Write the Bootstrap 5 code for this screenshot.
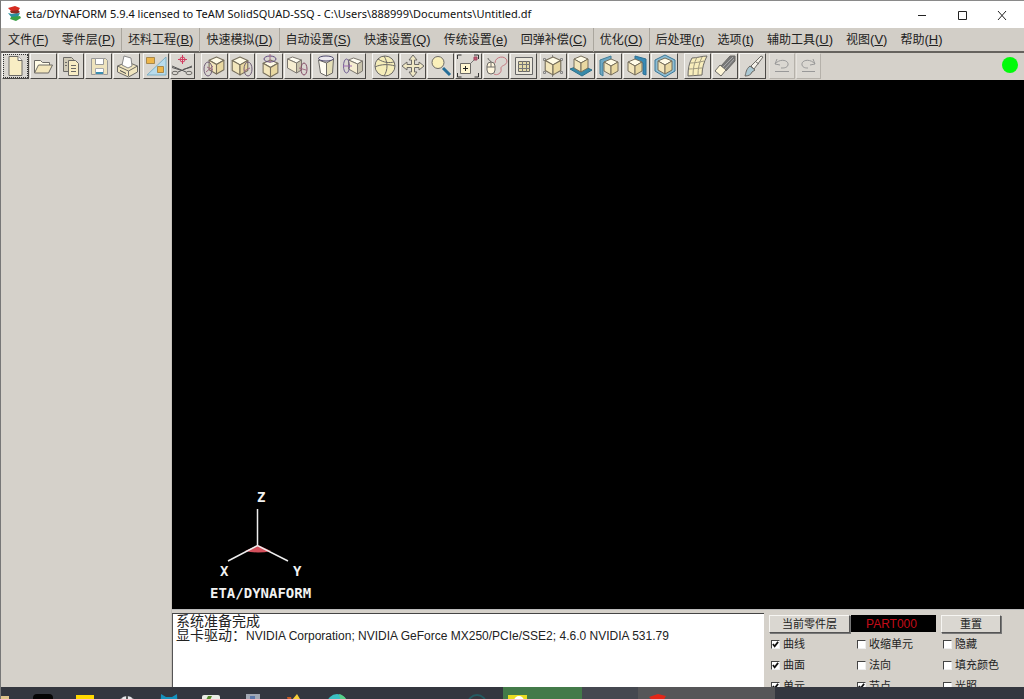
<!DOCTYPE html>
<html lang="zh-CN">
<head>
<meta charset="utf-8">
<meta name="viewport" content="width=device-width, initial-scale=1">
<title>eta/DYNAFORM</title>
<link rel="stylesheet" href="https://cdn.jsdelivr.net/npm/bootstrap@5.3.0/dist/css/bootstrap.min.css">
<style>
  :root { --face: #d5d1ca; --ui: "Liberation Sans", "Noto Sans CJK SC", sans-serif; }
  body { font-family: var(--ui); font-size: 12px; line-height: 16px; color: #222; background: var(--face); }
  .app-window { border-top: 1px solid #8a8a8a; border-left: 1px solid #777; }
  .title-bar { height: 27px; padding: 0 2px 2px 6px; font-family: "Noto Sans", sans-serif; font-size: 11px; color: #111; }
  .win-btn { width: 40px; height: 25px; border: 0; background: none; padding: 0; }
  .menu-bar { height: 25px; padding-left: 1px; border-bottom: 2px solid #66635e; background: #d2cec7; }
  .menu-bar a { display: block; padding: 4px 6px; color: #222; text-decoration: none; white-space: nowrap; border-right: 1px solid transparent; line-height: 16px; }
  .menu-bar li.split a { border-right-color: #aaa69e; }
  .hotkey { font-size: 13px; }
  .tool-bar { height: 27px; padding-left: 1px; }
  .tool-set { display: grid; grid-auto-flow: column; grid-auto-columns: 1fr; gap: 1px; }
  .g3 { margin-left: 3px; } .g6 { margin-left: 6px; }
  .w2 { width: 52px; } .w3 { width: 82px; } .w5 { width: 138px; } .w6 { width: 165px; }
  .tool { height: 26px; padding: 0; background: #dad7d1; border: 1px solid; border-color: #f6f5f2 #4c4a47 #4c4a47 #f6f5f2; display: flex; align-items: center; justify-content: center; overflow: hidden; }
  .tool svg { width: 24px; height: 24px; flex: none; fill: none; stroke: #6c6a66; }
  .tool.chosen { outline: 1px dotted #333; outline-offset: -2px; }
  .tool:disabled { border-color: #e6e3de #b5b1aa #b5b1aa #e6e3de; }
  .lamp { width: 16px; height: 16px; background: #00fb0a; margin-right: 6px; }
  .side { width: 171px; border-right: 1px solid #c4c0b9; }
  .scene { background: #000; }
  .axes { width: 130px; height: 120px; margin-left: 26px; }
  .axes text { font: bold 14px "DejaVu Sans Mono", monospace; fill: #f2f2f2; }
  .dock { height: 78px; padding-top: 3px; overflow: hidden; border-top: 1px solid #bbb; }
  .log { background: #fff; border-top: 1px solid #444; border-left: 1px solid #555; padding: 0 3px; font-size: 14px; line-height: 14px; }
  .log .latin { font-size: 12px; }
  .layer-panel { width: 260px; padding: 2px 0 0 5px; font-size: 11px; }
  .layer-grid { display: grid; grid-template-columns: 86px 86px 80px; row-gap: 5px; margin-top: 3px; }
  .flat-btn { height: 18px; padding: 0; line-height: 16px; font-size: 11px; color: #222; background: #dad7d1; border: 1px solid; border-color: #f6f5f2 #555 #555 #f6f5f2; box-shadow: 1px 1px 0 #777; }
  .part-name { width: 85px; height: 17px; background: #000; color: #c40c18; font-size: 12px; line-height: 18px; margin: 0 5px 0 1px; padding-right: 4px; }
  .btn-layer { width: 81px; } .btn-reset { width: 60px; }
  .opt { display: flex; align-items: center; height: 16px; gap: 3px; padding-left: 2px; white-space: nowrap; }
  .opt input { appearance: none; margin: 0; width: 9px; height: 9px; background: #fff; border: 1px solid; border-color: #444 #eee #eee #444; }
  .opt input:checked { background: #fff url("data:image/svg+xml,%3Csvg xmlns='http://www.w3.org/2000/svg' viewBox='0 0 8 8'%3E%3Cpath d='M1 3.5l2 2.5 4-5' fill='none' stroke='%23111' stroke-width='2'/%3E%3C/svg%3E") center / 7px no-repeat; }
  .task-bar { height: 12px; background: #34373f; overflow: hidden; }
  .task { width: 42px; padding: 7px 0 0; border: 0; background: none; display: flex; justify-content: center; align-items: start; flex: none; }
  .task svg { width: 20px; height: 20px; flex: none; }
  .task.edge { width: 21px; justify-content: start; }
  .task.idle { width: 98px; }
  .task.green { width: 79px; background: #437a49; justify-content: start; padding-left: 5px; margin-left: 5px; }
  .task.gray { width: 56px; background: #454850; }
  .task.open { width: 137px; background: #565658; justify-content: start; padding-left: 10px; }
</style>
</head>
<body>
<svg class="d-none" aria-hidden="true">
  <symbol id="cube" viewBox="0 0 16 18">
    <g stroke="#776f5c" stroke-width="1" stroke-linejoin="round">
      <path d="M8 1l7 3-7 4-7-4z" fill="#fffbe6"/><path d="M1 4l7 4v9l-7-4z" fill="#f3e6bb"/><path d="M15 4L8 8v9l7-4z" fill="#e9d8a1"/>
    </g>
  </symbol>
  <symbol id="slab" viewBox="0 0 16 18">
    <g stroke="#7c776f" stroke-width="1" stroke-linejoin="round">
      <path d="M1 3l5-2 9 3-5 3z" fill="#fffdf2"/><path d="M1 3l9 4v10l-9-5z" fill="#f7eed2"/><path d="M10 7l5-3v10l-5 3z" fill="#c9c3ac"/>
    </g>
  </symbol>
</svg>
<div class="app-window d-flex flex-column vh-100 overflow-hidden">
  <header class="title-bar bg-white d-flex align-items-center flex-shrink-0">
    <svg width="15" height="15" viewBox="0 0 15 15" class="me-1 flex-shrink-0">
      <path d="M1 2l7-2 5 2-2 3-6 1z" fill="#d52b20"/><path d="M3 5l8-1 2 2-3 2-6-1z" fill="#8c2b20"/><path d="M1 7l4 1 8-1-2 4-6 1z" fill="#2b91a0"/><path d="M4 11l9-1 1 2-5 3-6-2z" fill="#39a043"/>
    </svg>
    <span class="text-nowrap">eta/DYNAFORM 5.9.4 licensed to TeAM SolidSQUAD-SSQ - C:\Users\888999\Documents\Untitled.df</span>
    <div class="ms-auto d-flex">
      <button class="win-btn" aria-label="最小化"><svg width="12" height="12" viewBox="0 0 12 12" stroke="#222"><path d="M2 6.500h8"/></svg></button>
      <button class="win-btn" aria-label="最大化"><svg width="12" height="12" viewBox="0 0 12 12" fill="none" stroke="#222"><path d="M2.500 2.500h8v8h-8z"/></svg></button>
      <button class="win-btn" aria-label="关闭"><svg width="12" height="12" viewBox="0 0 12 12" stroke="#222"><path d="M2 2l8 9M10 2l-8 9"/></svg></button>
    </div>
  </header>
  <nav class="flex-shrink-0">
    <ul class="menu-bar list-unstyled d-flex mb-0">
      <li><a href="#">文件<span class="hotkey">(<u>F</u>)</span></a></li>
      <li class="split"><a href="#">零件层<span class="hotkey">(<u>P</u>)</span></a></li>
      <li class="split"><a href="#">坯料工程<span class="hotkey">(<u>B</u>)</span></a></li>
      <li class="split"><a href="#">快速模拟<span class="hotkey">(<u>D</u>)</span></a></li>
      <li><a href="#">自动设置<span class="hotkey">(<u>S</u>)</span></a></li>
      <li><a href="#">快速设置<span class="hotkey">(<u>Q</u>)</span></a></li>
      <li><a href="#">传统设置<span class="hotkey">(<u>e</u>)</span></a></li>
      <li class="split"><a href="#">回弹补偿<span class="hotkey">(<u>C</u>)</span></a></li>
      <li class="split"><a href="#">优化<span class="hotkey">(<u>O</u>)</span></a></li>
      <li><a href="#">后处理<span class="hotkey">(<u>r</u>)</span></a></li>
      <li><a href="#">选项<span class="hotkey">(<u>t</u>)</span></a></li>
      <li><a href="#">辅助工具<span class="hotkey">(<u>U</u>)</span></a></li>
      <li><a href="#">视图<span class="hotkey">(<u>V</u>)</span></a></li>
      <li><a href="#">帮助<span class="hotkey">(<u>H</u>)</span></a></li>
    </ul>
  </nav>
  <div class="tool-bar d-flex flex-shrink-0" role="toolbar" aria-label="工具栏">
    <div class="tool-set w5">
      <button class="tool chosen" aria-label="新建"><svg viewBox="0 0 24 24"><path d="M6 2.500h9l4 4v15H6z" fill="#f8edc4"/><path d="M15 2.500v4h4" fill="#fff"/></svg></button>
      <button class="tool" aria-label="打开"><svg viewBox="0 0 24 24"><path d="M3.500 19V6.500h6l2 2h7V11" fill="#fffbe6"/><path d="M3.500 19l4-8h14l-4 8z" fill="#f3e6bb"/></svg></button>
      <button class="tool" aria-label="复制"><svg viewBox="0 0 24 24"><path d="M4.500 3.500h8l2 2v12h-10z" fill="#d0cab6"/><path d="M9.500 6.500h7l3 3v12h-10z" fill="#f8edc4"/><path d="M12 11.500h5M12 14.500h5M12 17.500h5M6 8.500h2M6 11.500h2"/></svg></button>
      <button class="tool" aria-label="保存"><svg viewBox="0 0 24 24"><path d="M4.500 4.500h14l2 2v14h-16z" fill="#eee3bd" stroke="#999"/><path d="M8.500 4.500h8v6h-8z" fill="#fff" stroke="#999"/><path d="M8.500 14.500h8v6h-8z" fill="#fff" stroke="#aaa"/><path d="M9 18h7v2H9z" fill="#3b8fb0" stroke="none"/></svg></button>
      <button class="tool" aria-label="打印"><svg viewBox="0 0 24 24" stroke-linejoin="round"><path d="M2.500 12l10-4 10 4v6l-9 5-11-5z" fill="#f0e5be"/><path d="M2.500 12l11 5 9-5M13.500 17v5"/><path d="M7 11l2-9 7 2 1 8-4 2z" fill="#fff" stroke="#888"/><path d="M5 16.500l6 3" stroke="#444"/></svg></button>
    </div>
    <div class="tool-set w2 g3">
      <button class="tool" aria-label="坯料"><svg viewBox="0 0 24 24"><path d="M22 3v18H3z" fill="#b9dcec" stroke="#7fb0c5"/><path d="M2.500 3.500h8v6h-8z" fill="#eeb64a" stroke="#a8884c"/><path d="M13.500 12.500h6v6h-6z" fill="#eeb64a" stroke="#a8884c"/></svg></button>
      <button class="tool" aria-label="裁剪"><svg viewBox="0 0 24 24"><path d="M12.500 1v9M8 5.500h9" stroke="#d33d61"/><circle cx="12.500" cy="5.500" r="2.500" stroke="#d33d61"/><path d="M2 12l14 6M22 12L8 18M2 13.500l10 3M22 13l-9 2.500" stroke="#555"/><ellipse cx="5" cy="19" rx="3" ry="1.700"/><ellipse cx="19" cy="19" rx="3" ry="1.700"/></svg></button>
    </div>
    <div class="tool-set w6 g6">
      <button class="tool" aria-label="绕X旋转"><svg viewBox="0 0 24 24"><use href="#cube" x="6" y="2" width="17" height="19"/><ellipse cx="6" cy="15" rx="4" ry="7" stroke="#705e78"/><path d="M5 13l6 3M4 18l7-6" stroke="#a06b82"/></svg></button>
      <button class="tool" aria-label="绕Y旋转"><svg viewBox="0 0 24 24"><use href="#cube" x="1" y="2" width="18" height="20"/><ellipse cx="18" cy="15" rx="4" ry="7" stroke="#705e78"/><path d="M14 17l6-3" stroke="#a06b82"/></svg></button>
      <button class="tool" aria-label="绕Z旋转"><svg viewBox="0 0 24 24"><use href="#cube" x="4" y="5" width="17" height="19"/><ellipse cx="12" cy="5" rx="6" ry="3" stroke="#604a80"/><path d="M12 0v9" stroke="#a06b82"/></svg></button>
      <button class="tool" aria-label="绕U旋转"><svg viewBox="0 0 24 24"><use href="#slab" x="1" y="2" width="17" height="18"/><ellipse cx="19" cy="15" rx="3" ry="6" stroke="#844a66"/><path d="M14 14l7 2" stroke="#a06b82"/></svg></button>
      <button class="tool" aria-label="绕V旋转"><svg viewBox="0 0 24 24"><path d="M5.500 6l8 3v13l-6-3z" fill="#fffdf2"/><path d="M20.500 5l-7 4v13l6-3z" fill="#e5dfb8"/><ellipse cx="13" cy="4.500" rx="7.500" ry="2.500" stroke="#504c70" fill="#ece9ee"/></svg></button>
      <button class="tool" aria-label="绕W旋转"><svg viewBox="0 0 24 24"><use href="#slab" x="6" y="3" width="17" height="18"/><ellipse cx="5.500" cy="12" rx="3" ry="7" stroke="#705e90"/><path d="M2 12h9" stroke="#a06bb2"/></svg></button>
    </div>
    <div class="tool-set w6 g6">
      <button class="tool" aria-label="自由旋转"><svg viewBox="0 0 24 24"><circle cx="12" cy="12" r="10" fill="#f5edb9"/><path d="M11 2c4 6 4 14 0 20M2 13c6-3 14-3 20-1M5 5c6 4 12 4 16 3"/></svg></button>
      <button class="tool" aria-label="平移"><svg viewBox="0 0 24 24" stroke-linejoin="round"><path d="M12 1l4 5h-2.500v4.500H18V8l5 4-5 4v-2.500h-4.500V18H16l-4 5-4-5h2.500v-4.500H6V16l-5-4 5-4v2.500h4.500V6H8z" fill="#f0e8c4"/></svg></button>
      <button class="tool" aria-label="缩放"><svg viewBox="0 0 24 24"><path d="M14 14l7 7" stroke="#246d98" stroke-width="3"/><circle cx="9" cy="8.500" r="6" fill="#faf0ba"/></svg></button>
      <button class="tool" aria-label="窗口缩放"><svg viewBox="0 0 24 24"><path d="M1.500 5v-4h4M18 1h4.500v4M1.500 19v4h4M22.500 19v4h-4" stroke="#333"/><path d="M4.500 9.500h10v10h-10z" fill="#fff6d0"/><path d="M9.500 12v5M7 14.500h5" stroke="#222"/><path d="M14 10l5-5" stroke="#777"/><path d="M18 3h3v3h-3z" fill="#c55872" stroke="#9c4960"/></svg></button>
      <button class="tool" aria-label="自由缩放"><svg viewBox="0 0 24 24"><rect x="3" y="8" width="8" height="12" rx="4" fill="#fff6dc"/><path d="M3 13h8M7 8v5M7 8C6 5 4 7 4 4"/><path d="M11 9c0-7 11-8 12-2 0 5-7 4-6 8s-4 7-7 5" stroke="#c57880"/></svg></button>
      <button class="tool" aria-label="充满屏幕"><svg viewBox="0 0 24 24"><path d="M3.500 3.500h17v17h-17z" fill="#ece8dc" stroke="#666"/><path d="M6.500 7.500h11v10h-11z" fill="#e5dba9"/><path d="M6 10.500h12M6 14.500h12M10.500 7v11M14.500 7v11" stroke="#777"/></svg></button>
    </div>
    <div class="tool-set w5 g3">
      <button class="tool" aria-label="等轴视图"><svg viewBox="0 0 24 24"><path d="M2.500 4.500h2v2h-2zM19.500 4.500h2v2h-2zM2.500 17.500h2v2h-2zM19.500 17.500h2v2h-2zM11.500 1v2M11.500 21v2" stroke="#888"/><use href="#cube" x="3" y="2" width="18" height="20"/></svg></button>
      <button class="tool" aria-label="俯视图"><svg viewBox="0 0 24 24"><path d="M1 15l12 7 10-6-11-5z" fill="#368aa9" stroke="#2d708a"/><use href="#cube" x="4" y="1" width="16" height="18"/></svg></button>
      <button class="tool" aria-label="左视图"><svg viewBox="0 0 24 24"><path d="M3 6l11-4v4L6 9v13l-3-2z" fill="#6fa9c3" stroke="#3f7c98"/><use href="#cube" x="6" y="4" width="16" height="18"/></svg></button>
      <button class="tool" aria-label="右视图"><svg viewBox="0 0 24 24"><path d="M21 5L10 2v4l8 3v11l3 1z" fill="#388ab4" stroke="#2c6f94"/><use href="#cube" x="2" y="4" width="16" height="18"/></svg></button>
      <button class="tool" aria-label="用户视图"><svg viewBox="0 0 24 24"><path d="M12 1l10 5v11l-10 6-10-6V6z" fill="#8dbdd2" stroke="#3a7799"/><use href="#cube" x="4" y="3" width="16" height="18"/></svg></button>
    </div>
    <div class="tool-set w3 g6">
      <button class="tool" aria-label="网格"><svg viewBox="0 0 24 24"><path d="M7 4c5 0 10-2 15-2-3 6-5 12-5 19-5 0-9 1-14 1C3 15 4 9 7 4z" fill="#f8eebc"/><path d="M12 3c-3 6-4 12-4 19M17 3c-3 6-4 12-4 18M5 9c5 0 10-1 14-2M4 15c5 0 9-1 13-1" stroke="#a09a80"/></svg></button>
      <button class="tool" aria-label="清除"><svg viewBox="0 0 24 24"><path d="M8 12l9-10h5v5L13 17z" fill="#777"/><path d="M10 13L20 3M12 15l9-10" stroke="#aaa"/><path d="M2 17l5-6 6 5-5 6z" fill="#fff7d8" stroke-linejoin="round"/></svg></button>
      <button class="tool" aria-label="刷新"><svg viewBox="0 0 24 24"><path d="M10 12L20 2l2 1-9 12z" fill="#f4f1e9"/><path d="M9 12l5 4-3 2c-1 3-4 4-7 4 1-3 1-7 5-10z" fill="#a9c7d2"/><path d="M15 8l3 2"/></svg></button>
    </div>
    <div class="tool-set w2 g3">
      <button class="tool" disabled aria-label="撤销"><svg viewBox="0 0 24 24"><g stroke="#999"><path d="M7 5L5 10l5 1M5 10c5-6 14-4 13 1-1 3-4 3-7 3M5 17.500h14"/></g></svg></button>
      <button class="tool" disabled aria-label="重做"><svg viewBox="0 0 24 24"><g stroke="#999"><path d="M17 5l2 5-5 1M19 10C14 4 5 6 6 11c1 3 4 3 6 3M6 17.500h13"/></g></svg></button>
    </div>
    <span class="lamp rounded-circle ms-auto mt-1 flex-shrink-0"></span>
  </div>
  <main class="d-flex flex-grow-1 overflow-hidden">
    <aside class="side flex-shrink-0"></aside>
    <div class="d-flex flex-column flex-grow-1 overflow-hidden">
      <section class="scene flex-grow-1 d-flex align-items-end" aria-label="视图区">
        <svg class="axes" viewBox="0 0 130 120">
          <path d="M47 62L60 56l13 6q-13 3-26 0z" fill="#d4505c"/>
          <path d="M59.500 20v37M30 72l29.500-15.500L90 72" fill="none" stroke="#eee" stroke-width="1.500"/>
          <text x="59" y="13">Z</text><text x="22" y="87">X</text><text x="95" y="87">Y</text>
          <text x="12" y="109">ETA/DYNAFORM</text>
        </svg>
      </section>
      <section class="dock d-flex flex-shrink-0">
        <div class="log flex-grow-1 overflow-hidden" role="log">
          <div>系统准备完成</div>
          <div class="text-nowrap">显卡驱动：<span class="latin">NVIDIA Corporation; NVIDIA GeForce MX250/PCIe/SSE2; 4.6.0 NVIDIA 531.79</span></div>
        </div>
        <div class="layer-panel flex-shrink-0">
          <div class="d-flex">
            <button class="flat-btn btn-layer">当前零件层</button>
            <div class="part-name text-center">PART000</div>
            <button class="flat-btn btn-reset">重置</button>
          </div>
          <div class="layer-grid">
            <label class="opt"><input type="checkbox" checked>曲线</label>
            <label class="opt"><input type="checkbox">收缩单元</label>
            <label class="opt"><input type="checkbox">隐藏</label>
            <label class="opt"><input type="checkbox" checked>曲面</label>
            <label class="opt"><input type="checkbox">法向</label>
            <label class="opt"><input type="checkbox">填充颜色</label>
            <label class="opt"><input type="checkbox" checked>单元</label>
            <label class="opt"><input type="checkbox" checked>节点</label>
            <label class="opt"><input type="checkbox">光照</label>
          </div>
        </div>
      </section>
    </div>
  </main>
  <footer class="task-bar d-flex flex-shrink-0">
    <button class="task edge" aria-label="资源管理器"><svg viewBox="0 0 20 20"><path d="M0 2h8v18H0z" fill="#e0c48a"/></svg></button>
    <button class="task" aria-label="剪辑"><svg viewBox="0 0 20 20"><rect width="20" height="20" rx="4" fill="#050505"/></svg></button>
    <button class="task" aria-label="便笺"><svg viewBox="0 0 20 20"><path d="M1 1h18v19H1z" fill="#ffd800"/></svg></button>
    <button class="task" aria-label="浏览器"><svg viewBox="0 0 20 20"><circle cx="10" cy="11" r="9" fill="#e6e8ea"/><path d="M10 2v8M4 5l4 4M16 5l-4 4" stroke="#555" stroke-width="2"/></svg></button>
    <button class="task" aria-label="助手"><svg viewBox="0 0 20 20"><path d="M2 0l5 3h6l5-3 1 20H1z" fill="#1592bd"/></svg></button>
    <button class="task" aria-label="文档"><svg viewBox="0 0 20 20"><rect x="1" y="1" width="18" height="19" rx="2" fill="#e8ece4"/><path d="M7 2l4 0-2 4-4 0z" fill="#55882d"/></svg></button>
    <button class="task" aria-label="工具"><svg viewBox="0 0 20 20"><path d="M3 0h14v20H3z" fill="#a2a8b4"/><path d="M7 2h5v3H7z" fill="#5c78a8"/></svg></button>
    <button class="task" aria-label="收藏"><svg viewBox="0 0 20 20"><path d="M12 0l3 5 4 1v14H4l3-14z" fill="#f6cd38"/><path d="M2 3l4 0 1 4-4 0z" fill="#c85b28"/></svg></button>
    <button class="task" aria-label="网页"><svg viewBox="0 0 20 20"><circle cx="10" cy="10" r="10" fill="#3bc1c4"/><path d="M12 0q7 2 8 8h-6z" fill="#55cf88"/></svg></button>
    <span class="task idle"></span>
    <button class="task" aria-label="运行"><svg viewBox="0 0 20 20"><circle cx="10" cy="10" r="9" fill="none" stroke="#245b62" stroke-width="2"/></svg></button>
    <button class="task green" aria-label="便签"><svg viewBox="0 0 20 20"><path d="M0 1h19v19H0z" fill="#e9dc22"/><circle cx="11" cy="7" r="5" fill="#fff"/></svg></button>
    <span class="task gray"></span>
    <button class="task open" aria-label="DYNAFORM"><svg viewBox="0 0 20 20"><path d="M1 3l9-3 8 2-3 5-9 1z" fill="#e32618"/></svg></button>
  </footer>
</div>
<script src="https://cdn.jsdelivr.net/npm/bootstrap@5.3.0/dist/js/bootstrap.bundle.min.js"></script>
</body>
</html>
